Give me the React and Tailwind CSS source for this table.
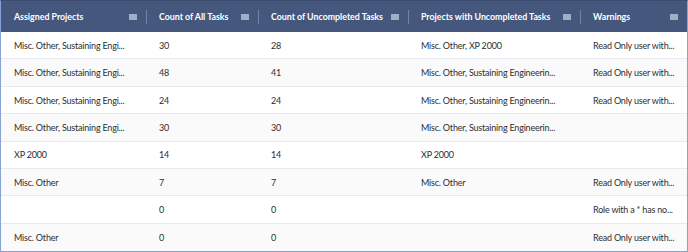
const cols = [
  { name: "Assigned Projects", w: "w-[145px]" },
  { name: "Count of All Tasks", w: "w-[112px]" },
  { name: "Count of Uncompleted Tasks", w: "w-[150px]" },
  { name: "Projects with Uncompleted Tasks", w: "w-[172px]" },
  { name: "Warnings", w: "w-[107px]" },
];

const rows = [
  ["Misc. Other, Sustaining Engi...", "30", "28", "Misc. Other, XP 2000", "Read Only user with..."],
  ["Misc. Other, Sustaining Engi...", "48", "41", "Misc. Other, Sustaining Engineerin...", "Read Only user with..."],
  ["Misc. Other, Sustaining Engi...", "24", "24", "Misc. Other, Sustaining Engineerin...", "Read Only user with..."],
  ["Misc. Other, Sustaining Engi...", "30", "30", "Misc. Other, Sustaining Engineerin...", ""],
  ["XP 2000", "14", "14", "XP 2000", ""],
  ["Misc. Other", "7", "7", "Misc. Other", "Read Only user with..."],
  ["", "0", "0", "", "Role with a * has no..."],
  ["Misc. Other", "0", "0", "", "Read Only user with..."],
];

function MenuIcon() {
  return <div className="w-[8px] h-[6px] bg-[#a3aec6] shrink-0" />;
}

export default function App() {
  return (
    <div
      className="w-[688px] h-[252px] border border-[#86a2d6] border-t-[#3c4c70] bg-white overflow-hidden"
      style={{ fontFamily: 'Lato, "Noto Sans", sans-serif' }}
    >
      <div className="flex h-[31px] bg-[#46577d] text-white font-bold text-[8.8px]">
        {cols.map((c, i) => (
          <div key={i} className={`${c.w} shrink-0 flex items-center`}>
            {i > 0 && <div className="w-px h-[14px] bg-[#7583a3] shrink-0" />}
            <div className={`flex-1 flex items-center justify-between ${i === 0 ? "pl-[13px]" : "pl-[12px]"} pr-[9px]`}>
              <span className="whitespace-nowrap">{c.name}</span>
              <MenuIcon />
            </div>
          </div>
        ))}
      </div>
      {rows.map((r, ri) => (
        <div
          key={ri}
          className={`flex h-[27.375px] items-center pt-px text-[#2e2e2e] text-[9px] tracking-[-0.2px] ${ri % 2 === 1 ? "bg-[#fafafa]" : "bg-white"} ${ri < rows.length - 1 ? "border-b border-[#e6e9ef]" : ""}`}
        >
          {r.map((cell, ci) => (
            <div key={ci} className={`${cols[ci].w} shrink-0 whitespace-nowrap pl-[13px]`}>
              {cell}
            </div>
          ))}
        </div>
      ))}
    </div>
  );
}
